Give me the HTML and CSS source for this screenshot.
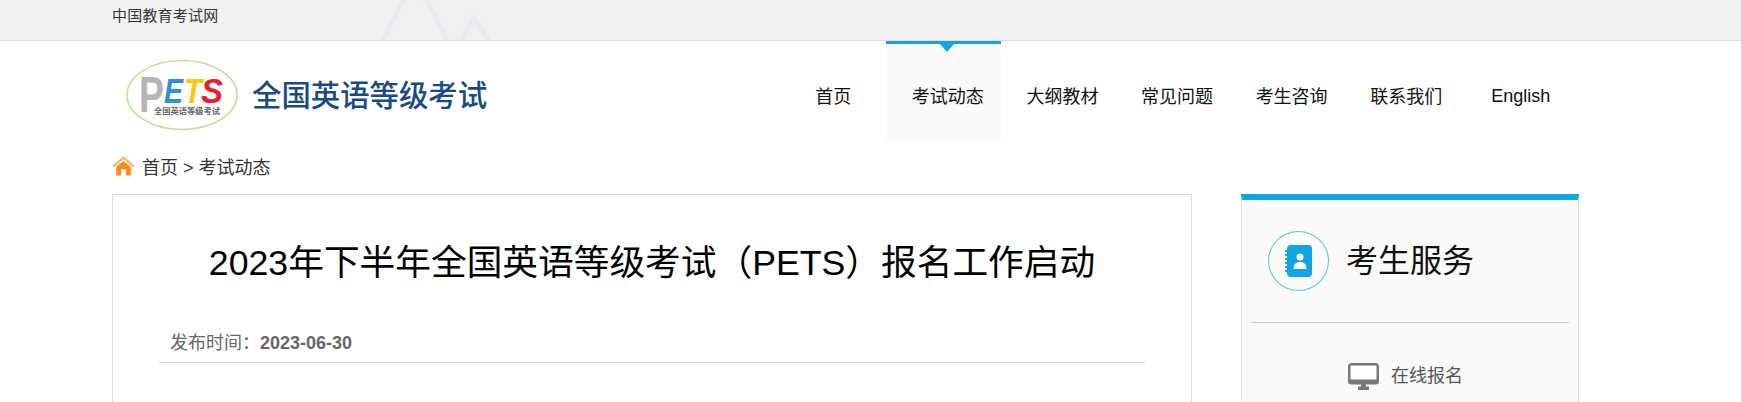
FILE: index.html
```html
<!DOCTYPE html>
<html lang="zh-CN">
<head>
    <meta charset="UTF-8">
    <meta name="viewport" content="width=device-width, initial-scale=1.0">
    <title>2023年下半年全国英语等级考试（PETS）报名工作启动</title>
    <link rel="stylesheet" href="styles.css">
</head>
<body>
    <div class="top-bar">
        <svg class="top-bar-peaks" width="140" height="40" viewBox="0 0 140 40" aria-hidden="true">
            <path d="M12 42 L45 -23 L78 42 M91 42 L104 17 L119 42"></path>
        </svg>
        <a class="top-bar-link">中国教育考试网</a>
    </div>

    <div class="page">
        <header class="header">
            <div class="logo">
                <svg class="logo-mark" width="112" height="72" viewBox="0 0 112 72">
                    <ellipse cx="56" cy="36" rx="55" ry="34.5"></ellipse>
                    <text class="logo-p" x="13" y="53" textLength="25" lengthAdjust="spacingAndGlyphs">P</text>
                    <text class="logo-e" x="38" y="44" textLength="19" lengthAdjust="spacingAndGlyphs">E</text>
                    <text class="logo-t" x="58" y="44" textLength="18" lengthAdjust="spacingAndGlyphs">T</text>
                    <text class="logo-s" x="75" y="44" textLength="22" lengthAdjust="spacingAndGlyphs">S</text>
                    <text class="logo-small" x="28" y="55" textLength="66" lengthAdjust="spacingAndGlyphs">全国英语等级考试</text>
                </svg>
                <span class="logo-text">全国英语等级考试</span>
            </div>
            <nav class="nav">
                <a class="nav-item">首页</a>
                <a class="nav-item active">考试动态</a>
                <a class="nav-item">大纲教材</a>
                <a class="nav-item">常见问题</a>
                <a class="nav-item">考生咨询</a>
                <a class="nav-item">联系我们</a>
                <a class="nav-item nav-item-en">English</a>
            </nav>
        </header>

        <div class="breadcrumb">
            <svg width="23" height="20" viewBox="0 0 22 19" aria-hidden="true">
                <path class="home-roof" d="M1 10 L11 1.5 L21 10"></path>
                <path class="home-body" d="M4 10.5 L11 4.6 L18 10.5 V18.5 H13.5 V12.5 H8.5 V18.5 H4 Z"></path>
            </svg>
            <span>首页 &gt; 考试动态</span>
        </div>

        <div class="columns">
            <main class="article">
                <h1 class="article-title">2023年下半年全国英语等级考试（PETS）报名工作启动</h1>
                <div class="article-meta">发布时间：<strong>2023-06-30</strong></div>
                <p class="article-body">2023年下半年全国英语等级考试（PETS）报名工作即将开始，现将有关事项通知如下。</p>
            </main>

            <aside class="side">
                <div class="side-head">
                    <span class="side-icon">
                        <svg width="30" height="34" viewBox="0 0 30 34" aria-hidden="true">
                            <rect class="book" x="3" y="1" width="25" height="32" rx="4"></rect>
                            <path class="book-rings" d="M1 7h3 M1 11h3 M1 15h3 M1 19h3 M1 23h3 M1 27h3"></path>
                            <circle class="book-person" cx="16" cy="13" r="3.5"></circle>
                            <path class="book-person" d="M9.5 25 C9.5 20 12 18 16 18 C20 18 22.5 20 22.5 25 Z"></path>
                        </svg>
                    </span>
                    <h2 class="side-title">考生服务</h2>
                </div>
                <a class="side-link">
                    <svg width="31" height="27" viewBox="0 0 31 27" aria-hidden="true">
                        <rect class="screen" x="1.25" y="1.25" width="28.5" height="19" rx="2.5"></rect>
                        <path class="screen-base" d="M0.5 16.5 H30.5 V18 A3 3 0 0 1 27.5 21 H3.5 A3 3 0 0 1 0.5 18 Z M13 21 H18 V23.5 H21 V27 H10 V23.5 H13 Z"></path>
                    </svg>
                    <span class="side-link-text">在线报名</span>
                </a>
            </aside>
        </div>
    </div>
</body>
</html>
```
FILE: styles.css
```css
body {
    margin: 0;
    background: #ffffff;
    color: #333333;
    font-family: "Liberation Sans", "Noto Sans CJK SC", sans-serif;
    font-size: 18px;
}

.top-bar {
    position: relative;
    height: 40px;
    padding-left: 112px;
    background: #f1f1f1;
    border-bottom: 1px solid #dddddd;
    overflow: hidden;
}

.top-bar-peaks {
    position: absolute;
    top: 0;
    left: 370px;
}

.top-bar-peaks path {
    fill: none;
    stroke: #e9eaf1;
    stroke-width: 5;
    stroke-linecap: round;
    stroke-linejoin: round;
}

.top-bar-link {
    font-size: 15px;
    line-height: 32px;
    letter-spacing: 0.2px;
    color: #333333;
}

.page {
    width: 1467px;
    margin-left: 112px;
}

.header {
    display: flex;
    justify-content: space-between;
    height: 100px;
}

.logo {
    display: flex;
    align-items: center;
    gap: 14px;
    padding: 8px 0 0 14px;
}

.logo-mark ellipse {
    fill: #ffffff;
    stroke: #c3dc8c;
    stroke-width: 1.5;
}

.logo-p {
    font-size: 50px;
    font-weight: bold;
    fill: #b5b5b5;
}

.logo-e, .logo-t, .logo-s {
    font-size: 35px;
    font-weight: bold;
    font-style: italic;
}

.logo-e { fill: #2f8fd8; }
.logo-t { fill: #fbc80f; }
.logo-s { fill: #e6202c; }

.logo-small {
    font-size: 8px;
    font-weight: bold;
    fill: #666666;
}

.logo-text {
    font-size: 29.4px;
    font-weight: 500;
    color: #1a4a86;
    white-space: nowrap;
    padding-bottom: 4px;
}

.nav {
    display: flex;
    margin-right: 5.4px;
}

.nav-item {
    position: relative;
    box-sizing: border-box;
    width: 114.6px;
    height: 99px;
    padding: 6px 0 0 9px;
    border-top: 3px solid transparent;
    display: flex;
    align-items: center;
    justify-content: center;
    color: #111111;
    white-space: nowrap;
}

.nav-item-en {
    padding-top: 8px;
}

.nav-item.active {
    background: #fafafa;
    border-top-color: #12a5e3;
}

.nav-item.active::after {
    content: "";
    position: absolute;
    top: 0;
    left: 54px;
    border-left: 7px solid transparent;
    border-right: 7px solid transparent;
    border-top: 8px solid #12a5e3;
}

.breadcrumb {
    display: flex;
    align-items: center;
    gap: 7px;
    height: 53px;
    padding-bottom: 4px;
    box-sizing: border-box;
    color: #333333;
}

.home-roof {
    fill: none;
    stroke: #ffb066;
    stroke-width: 2;
}

.home-body {
    fill: #ff8a14;
}

.columns {
    display: flex;
    justify-content: space-between;
    align-items: flex-start;
}

.article {
    box-sizing: border-box;
    width: 1080px;
    border: 1px solid #dddddd;
}

.article-title {
    margin: 41px 0 0;
    font-size: 35.7px;
    font-weight: normal;
    line-height: 54px;
    text-align: center;
    color: #000000;
}

.article-meta {
    margin: 40px 45px 0;
    padding: 0 0 6px 12px;
    border-bottom: 1px solid #dddddd;
    color: #666666;
    line-height: 26px;
}

.article-body {
    margin: 34px 45px 0;
    text-indent: 2em;
    line-height: 32px;
    color: #333333;
}

.side {
    box-sizing: border-box;
    width: 338px;
    background: #fafafa;
    border: 1px solid #dddddd;
    border-top: 6px solid #12a5e3;
    padding-bottom: 24px;
}

.side-head {
    display: flex;
    align-items: center;
    gap: 17px;
    margin: 0 9px;
    padding: 31px 0 31px 17px;
    border-bottom: 1px solid #cccccc;
}

.side-icon {
    box-sizing: border-box;
    width: 61px;
    height: 60px;
    border: 1.5px solid #5cc0ec;
    border-radius: 50%;
    display: flex;
    align-items: center;
    justify-content: center;
}

.book { fill: #12a5e3; }

.book-rings {
    fill: none;
    stroke: #12a5e3;
    stroke-width: 2;
}

.book-person { fill: #ffffff; }

.side-title {
    margin: 0;
    padding-bottom: 7px;
    font-size: 32px;
    font-weight: normal;
    color: #111111;
}

.side-link {
    display: flex;
    align-items: center;
    justify-content: center;
    gap: 12px;
    margin-top: 38px;
    padding-right: 9px;
    color: #555555;
}

.side-link-text {
    padding-bottom: 5px;
}

.screen {
    fill: #ffffff;
    stroke: #777777;
    stroke-width: 2.5;
}

.screen-base { fill: #777777; }
```
